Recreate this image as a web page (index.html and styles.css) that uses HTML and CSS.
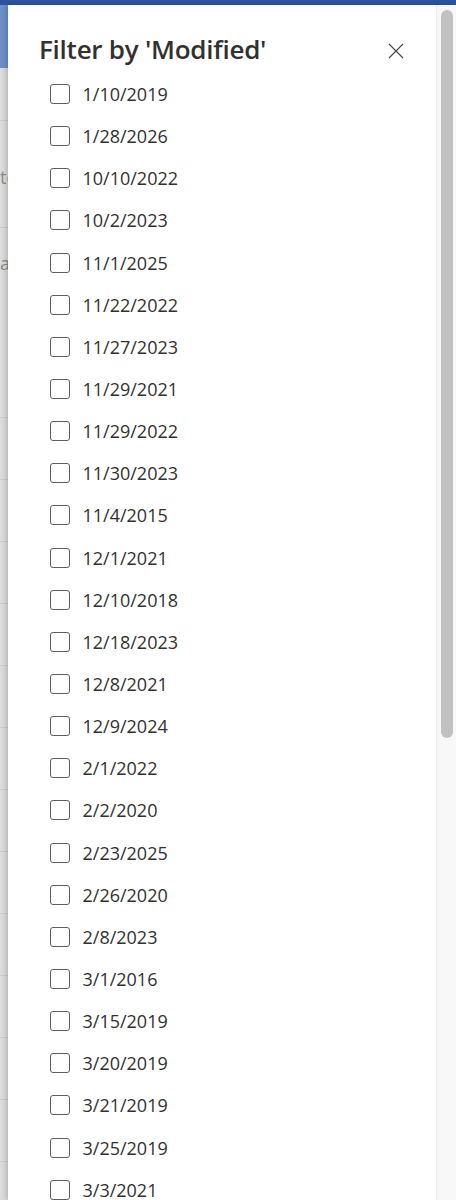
FILE: index.html
```html
<!DOCTYPE html>
<html>
<head>
<meta charset="utf-8">
<link rel="stylesheet" href="styles.css">
</head>
<body>
<div class="topbar"></div>
<div class="main">
  <div class="under">
    <div class="under-head"></div>
    <div class="under-row r1"></div>
    <div class="under-row r2"><span class="frag f1">ate</span></div>
    <div class="under-row r3"><span class="frag f2">ab</span></div>
    <div class="under-row r4"></div>
    <div class="under-row r4"></div>
    <div class="under-row r4"></div>
    <div class="under-row r4"></div>
    <div class="under-row r4"></div>
    <div class="under-row r4"></div>
    <div class="under-row r4"></div>
    <div class="under-row r4"></div>
    <div class="under-row r4"></div>
    <div class="under-row r4"></div>
    <div class="under-row r4"></div>
    <div class="under-row r4"></div>
    <div class="under-row r4"></div>
  </div>
  <div class="panel">
    <div class="panel-body">
      <div class="header">
        <h1 class="title">Filter by 'Modified'</h1>
        <button class="close" aria-label="Close">
          <svg width="16" height="16" viewBox="0 0 16 16"><path d="M1 1 L15 15 M15 1 L1 15" stroke="#4a4a4a" stroke-width="1.2" fill="none"/></svg>
        </button>
      </div>
      <ul class="list">
        <li class="item"><span class="box"></span><span class="label">1/10/2019</span></li>
        <li class="item"><span class="box"></span><span class="label">1/28/2026</span></li>
        <li class="item"><span class="box"></span><span class="label">10/10/2022</span></li>
        <li class="item"><span class="box"></span><span class="label">10/2/2023</span></li>
        <li class="item"><span class="box"></span><span class="label">11/1/2025</span></li>
        <li class="item"><span class="box"></span><span class="label">11/22/2022</span></li>
        <li class="item"><span class="box"></span><span class="label">11/27/2023</span></li>
        <li class="item"><span class="box"></span><span class="label">11/29/2021</span></li>
        <li class="item"><span class="box"></span><span class="label">11/29/2022</span></li>
        <li class="item"><span class="box"></span><span class="label">11/30/2023</span></li>
        <li class="item"><span class="box"></span><span class="label">11/4/2015</span></li>
        <li class="item"><span class="box"></span><span class="label">12/1/2021</span></li>
        <li class="item"><span class="box"></span><span class="label">12/10/2018</span></li>
        <li class="item"><span class="box"></span><span class="label">12/18/2023</span></li>
        <li class="item"><span class="box"></span><span class="label">12/8/2021</span></li>
        <li class="item"><span class="box"></span><span class="label">12/9/2024</span></li>
        <li class="item"><span class="box"></span><span class="label">2/1/2022</span></li>
        <li class="item"><span class="box"></span><span class="label">2/2/2020</span></li>
        <li class="item"><span class="box"></span><span class="label">2/23/2025</span></li>
        <li class="item"><span class="box"></span><span class="label">2/26/2020</span></li>
        <li class="item"><span class="box"></span><span class="label">2/8/2023</span></li>
        <li class="item"><span class="box"></span><span class="label">3/1/2016</span></li>
        <li class="item"><span class="box"></span><span class="label">3/15/2019</span></li>
        <li class="item"><span class="box"></span><span class="label">3/20/2019</span></li>
        <li class="item"><span class="box"></span><span class="label">3/21/2019</span></li>
        <li class="item"><span class="box"></span><span class="label">3/25/2019</span></li>
        <li class="item"><span class="box"></span><span class="label">3/3/2021</span></li>
      </ul>
    </div>
    <div class="scrollbar"><div class="thumb"></div></div>
  </div>
</div>
</body>
</html>
```
FILE: styles.css
```css
* { box-sizing: border-box; }
html, body {
  margin: 0;
  padding: 0;
  width: 456px;
  height: 1200px;
  overflow: hidden;
  background: #fff;
  font-family: "Open Sans", "Noto Sans", sans-serif;
  color: #323130;
}
.topbar {
  height: 5px;
  background: #2d5399;
}
.main {
  display: flex;
  height: 1195px;
}
.under {
  width: 8px;
  flex: none;
  background: #dcdcdc;
  overflow: hidden;
  display: flex;
  flex-direction: column;
}
.under-head {
  height: 63px;
  flex: none;
  background: #6d90c9;
}
.under-row {
  flex: none;
  border-bottom: 1px solid #cdcdcd;
  position: relative;
  white-space: nowrap;
  font-size: 18px;
  color: #8c8c8c;
}
.r1 { height: 53px; }
.r2 { height: 107px; padding-top: 44px; }
.r3 { height: 190px; padding-top: 23px; }
.r4 { height: 62px; }
.frag { display: block; line-height: 24px; }
.f1 { margin-left: -10px; }
.f2 { margin-left: 0; }

.panel {
  flex: 1;
  display: flex;
  background: #fff;
  box-shadow: -2px 0 5px rgba(0,0,0,0.18);
  position: relative;
  overflow: hidden;
}
.panel-body {
  flex: 1;
  padding: 26px 0 0 0;
}
.header {
  display: flex;
  align-items: center;
  justify-content: space-between;
  padding: 0 32px 0 31px;
  height: 36px;
}
.title {
  margin: 0;
  font-size: 26px;
  line-height: 36px;
  font-weight: 600;
  color: #323130;
  letter-spacing: -0.25px;
}
.close {
  border: 0;
  background: none;
  padding: 0;
  width: 16px;
  height: 16px;
  display: flex;
  margin-top: 4px;
}
.list {
  list-style: none;
  margin: 6px 0 0 0;
  padding: 0 0 0 42px;
}
.item {
  display: flex;
  align-items: center;
  height: 42.15px;
}
.box {
  width: 20px;
  height: 20px;
  border: 1.5px solid #605e5c;
  border-radius: 3px;
  flex: none;
}
.label {
  margin-left: 12.5px;
  font-size: 18px;
  line-height: 24px;
  color: #323130;
}
.scrollbar {
  width: 20px;
  flex: none;
  background: #f8f8f8;
  border-left: 1px solid #ebebeb;
  padding: 5px 3px 0 4px;
}
.thumb {
  height: 728px;
  background: #c1c1c1;
  border-radius: 6px;
}
```
